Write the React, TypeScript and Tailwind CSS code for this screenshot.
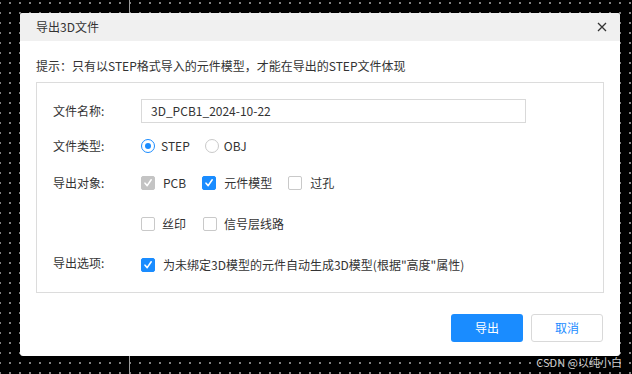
import React from "react";

const font = "font-['Microsoft_YaHei','Noto_Sans_CJK_SC',sans-serif]";

function Check({ checked, disabled }: { checked?: boolean; disabled?: boolean }) {
  const box = disabled
    ? "bg-[#c4c4c4] border-[#c4c4c4]"
    : checked
    ? "bg-[#1a8cff] border-[#1a8cff]"
    : "bg-white border-[#c9c9c9]";
  return (
    <span className={`inline-flex h-[14px] w-[14px] shrink-0 items-center justify-center rounded-[2px] border ${box}`}>
      {checked && (
        <svg width="10" height="10" viewBox="0 0 10 10" fill="none" aria-hidden="true">
          <path d="M2 5.2 4.2 7.6 8.2 1.8" stroke="white" strokeWidth="1.6" strokeLinecap="round" strokeLinejoin="round" />
        </svg>
      )}
    </span>
  );
}

function Radio({ checked }: { checked?: boolean }) {
  return (
    <span
      className={`inline-flex h-[14px] w-[14px] shrink-0 items-center justify-center rounded-full border bg-white ${
        checked ? "border-[#1a8cff]" : "border-[#c9c9c9]"
      }`}
    >
      {checked && <span className="h-[6px] w-[6px] rounded-full bg-[#1a8cff]" />}
    </span>
  );
}

function Opt({ children, gap = "gap-[8px]" }: { children: React.ReactNode; gap?: string }) {
  return <label className={`flex items-center ${gap}`}>{children}</label>;
}

export default function App() {
  return (
    <div
      className={`relative h-[374px] w-[632px] overflow-hidden bg-black bg-[radial-gradient(circle,#8a8a8a_0.7px,transparent_0.8px)] bg-[size:10px_10px] bg-[position:5px_-2px] pt-[13px] pl-[20px] ${font}`}
    >
      {/* canvas line behind the dialog */}
      <div className="absolute left-[129px] top-0 h-full w-px bg-[#9a9a9a]" />

      <div className="relative flex h-[343px] w-[600px] flex-col overflow-hidden rounded-[3px] bg-white">
        {/* Header */}
        <div className="flex h-[28px] items-center justify-between bg-[#f0f0f0] pl-[16px] pr-[13px]">
          <span className="text-[12px] text-[#333]">导出3D文件</span>
          <svg width="10" height="10" viewBox="0 0 10 10" aria-hidden="true">
            <path d="M1 1l8 8M9 1l-8 8" stroke="#333" strokeWidth="1.3" />
          </svg>
        </div>

        <div className="px-[16px]">
          <p className="mt-[16px] text-[12px] leading-[18px] text-[#333]">
            提示：只有以STEP格式导入的元件模型，才能在导出的STEP文件体现
          </p>

          {/* Form box */}
          <div className="mt-[7px] h-[211px] border border-[#dcdcdc] pl-[16px] pt-[16px] text-[12px] text-[#333]">
            <div className="grid grid-cols-[88px_1fr] items-center">
              <span>文件名称:</span>
              <div className="flex h-[24px] w-[385px] items-center border border-[#d9d9d9] px-[9px]">
                3D_PCB1_2024-10-22
              </div>
            </div>

            <div className="mt-[11px] grid h-[24px] grid-cols-[88px_1fr] items-center">
              <span>文件类型:</span>
              <div className="flex items-center gap-[15px]">
                <Opt gap="gap-[6px]">
                  <Radio checked />
                  <span>STEP</span>
                </Opt>
                <Opt gap="gap-[5px]">
                  <Radio />
                  <span>OBJ</span>
                </Opt>
              </div>
            </div>

            <div className="mt-[13px] grid grid-cols-[88px_1fr] items-start">
              <span className="leading-[24px]">导出对象:</span>
              <div className="flex flex-col gap-[17px]">
                <div className="flex h-[24px] items-center gap-[16px]">
                  <Opt gap="gap-[8px]">
                    <Check checked disabled />
                    <span>PCB</span>
                  </Opt>
                  <Opt>
                    <Check checked />
                    <span>元件模型</span>
                  </Opt>
                  <Opt>
                    <Check />
                    <span>过孔</span>
                  </Opt>
                </div>
                <div className="flex h-[24px] items-center gap-[17px]">
                  <Opt gap="gap-[7px]">
                    <Check />
                    <span>丝印</span>
                  </Opt>
                  <Opt gap="gap-[7px]">
                    <Check />
                    <span>信号层线路</span>
                  </Opt>
                </div>
              </div>
            </div>

            <div className="mt-[17px] grid h-[24px] grid-cols-[88px_1fr] items-center">
              <span className="-mt-[4px]">导出选项:</span>
              <Opt>
                <Check checked />
                <span>为未绑定3D模型的元件自动生成3D模型(根据"高度"属性)</span>
              </Opt>
            </div>
          </div>

          {/* Footer */}
          <div className="mt-[21px] flex justify-end gap-[8px] pr-[1px]">
            <button className="h-[28px] w-[72px] rounded-[3px] bg-[#1a8cff] text-[12px] text-white">导出</button>
            <button className="h-[28px] w-[72px] rounded-[3px] border border-[#d9d9d9] bg-white text-[12px] text-[#1a8cff]">
              取消
            </button>
          </div>
        </div>
      </div>

      <span className="absolute right-[10px] bottom-[4px] text-[11px] text-[#cfcfcf]">CSDN @以纯小白</span>
    </div>
  );
}
